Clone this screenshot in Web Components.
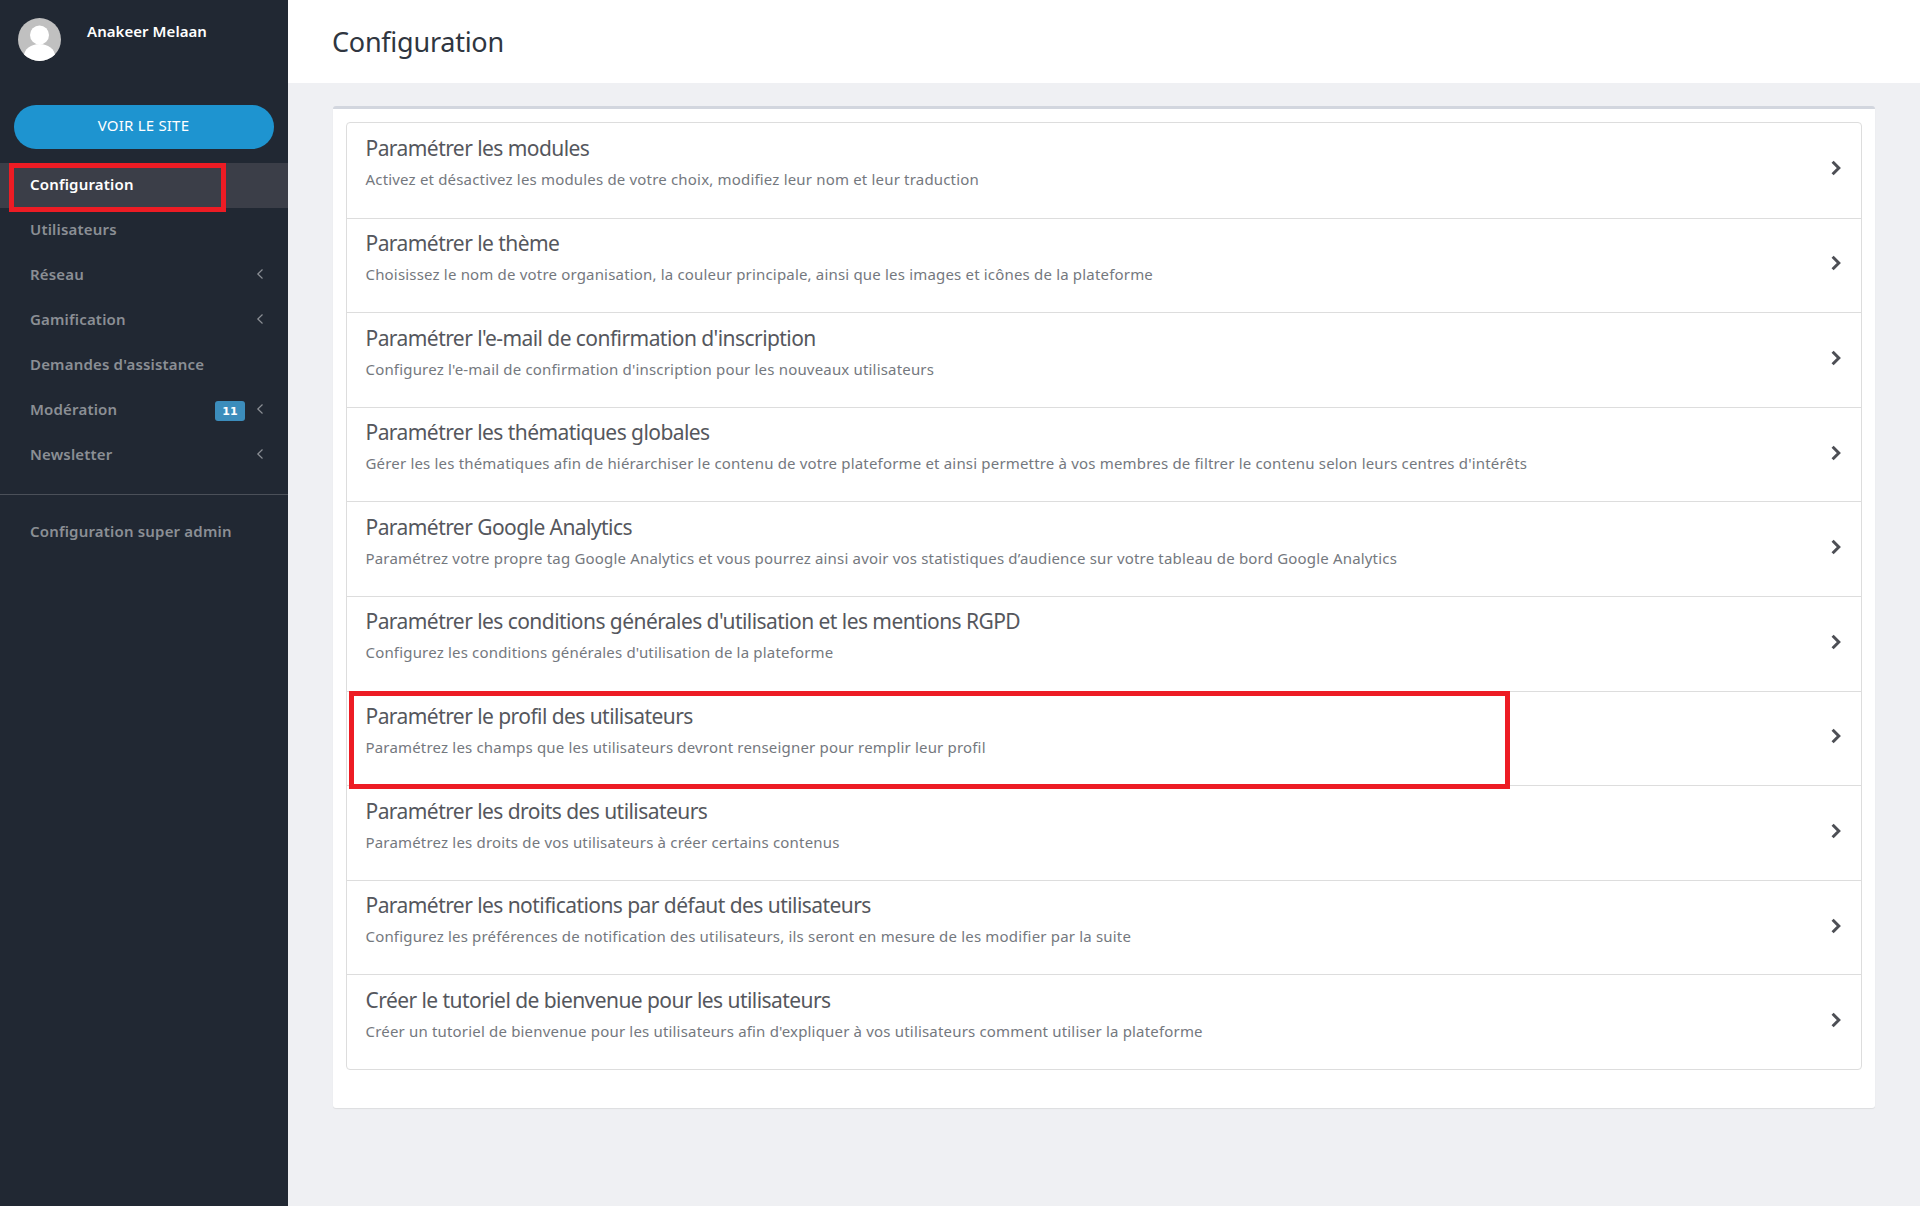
<!DOCTYPE html>
<html lang="fr">
<head>
<meta charset="utf-8">
<title>Configuration</title>
<style>
    html, body { margin: 0; height: 100%; background: #eff0f3; }
    body { font-family: "Noto Sans", sans-serif; }
    admin-shell { height: 1206px; }
</style>
</head>
<body>
<admin-shell>
    <admin-sidebar slot="side">
        <nav-item active marked>Configuration</nav-item>
        <nav-item>Utilisateurs</nav-item>
        <nav-item caret>Réseau</nav-item>
        <nav-item caret>Gamification</nav-item>
        <nav-item>Demandes d'assistance</nav-item>
        <nav-item caret badge="11">Modération</nav-item>
        <nav-item caret>Newsletter</nav-item>
        <nav-item slot="after">Configuration super admin</nav-item>
    </admin-sidebar>
    <page-header slot="head">Configuration</page-header>
    <settings-card>
        <settings-row title="Paramétrer les modules">Activez et désactivez les modules de votre choix, modifiez leur nom et leur traduction</settings-row>
        <settings-row title="Paramétrer le thème">Choisissez le nom de votre organisation, la couleur principale, ainsi que les images et icônes de la plateforme</settings-row>
        <settings-row title="Paramétrer l'e-mail de confirmation d'inscription">Configurez l'e-mail de confirmation d'inscription pour les nouveaux utilisateurs</settings-row>
        <settings-row title="Paramétrer les thématiques globales">Gérer les les thématiques afin de hiérarchiser le contenu de votre plateforme et ainsi permettre à vos membres de filtrer le contenu selon leurs centres d'intérêts</settings-row>
        <settings-row title="Paramétrer Google Analytics">Paramétrez votre propre tag Google Analytics et vous pourrez ainsi avoir vos statistiques d’audience sur votre tableau de bord Google Analytics</settings-row>
        <settings-row title="Paramétrer les conditions générales d'utilisation et les mentions RGPD">Configurez les conditions générales d'utilisation de la plateforme</settings-row>
        <settings-row marked title="Paramétrer le profil des utilisateurs">Paramétrez les champs que les utilisateurs devront renseigner pour remplir leur profil</settings-row>
        <settings-row title="Paramétrer les droits des utilisateurs">Paramétrez les droits de vos utilisateurs à créer certains contenus</settings-row>
        <settings-row title="Paramétrer les notifications par défaut des utilisateurs">Configurez les préférences de notification des utilisateurs, ils seront en mesure de les modifier par la suite</settings-row>
        <settings-row title="Créer le tutoriel de bienvenue pour les utilisateurs">Créer un tutoriel de bienvenue pour les utilisateurs afin d'expliquer à vos utilisateurs comment utiliser la plateforme</settings-row>
    </settings-card>
</admin-shell>

<script>
class AdminShell extends HTMLElement {
    constructor() {
        super();
        this.attachShadow({ mode: 'open' });
        this.shadowRoot.innerHTML = `
            <style>
                :host { display: grid; grid-template-columns: 288px 1fr; background: #eff0f3; }
                .main { display: flex; flex-direction: column; min-width: 0; }
                .content { padding: 23px 45px 0 44.5px; }
            </style>
            <slot name="side"></slot>
            <div class="main">
                <slot name="head"></slot>
                <div class="content"><slot></slot></div>
            </div>
        `;
    }
}

class AdminSidebar extends HTMLElement {
    constructor() {
        super();
        this.attachShadow({ mode: 'open' });
        this.shadowRoot.innerHTML = `
            <style>
                :host { display: block; background: #212833; color: #8b8f95; font-family: "Noto Sans", sans-serif; }
                .user { display: flex; height: 43px; padding: 18px 0 0 18px; gap: 26px; }
                .avatar { width: 43px; height: 43px; flex: none; }
                .name { color: #fff; font-size: 15px; font-weight: 600; letter-spacing: 0.05px; line-height: 27px; }
                .cta {
                    display: block; margin: 44px 14px 14px; height: 44px; border-radius: 22px;
                    background: #1e94d0; color: #fff; font-size: 15px; letter-spacing: 0.2px;
                    line-height: 41px; text-align: center; padding-right: 1px;
                }
                .after { display: block; margin-top: 16px; padding-top: 15px; border-top: 1px solid #4b5059; }
            </style>
            <div class="user">
                <svg class="avatar" viewBox="0 0 43 43">
                    <circle cx="21.5" cy="21.5" r="21.5" fill="#c0c0c0"/>
                    <clipPath id="av"><circle cx="21.5" cy="21.5" r="21.5"/></clipPath>
                    <g clip-path="url(#av)" fill="#fff">
                        <circle cx="21.5" cy="17" r="9.5"/>
                        <ellipse cx="21.5" cy="38" rx="15.5" ry="12"/>
                    </g>
                </svg>
                <div class="name">Anakeer Melaan</div>
            </div>
            <a class="cta">VOIR LE SITE</a>
            <slot></slot>
            <div class="after"><slot name="after"></slot></div>
        `;
    }
}

class NavItem extends HTMLElement {
    constructor() {
        super();
        this.attachShadow({ mode: 'open' });
    }

    connectedCallback() {
        const badge = this.getAttribute('badge');
        const caret = this.hasAttribute('caret');
        this.shadowRoot.innerHTML = `
            <style>
                :host {
                    display: flex; align-items: center; position: relative; height: 45px; box-sizing: border-box;
                    padding: 0 24px 4px 30px; font-size: 15px; font-weight: 600; letter-spacing: 0.18px; color: #8b8f95;
                }
                :host([active]) { background: #3b3e48; color: #fff; }
                .label { flex: 1; }
                .badge {
                    width: 30px; height: 20px; border-radius: 3px; background: #3c8dbc; color: #fff; margin: 4px 11px 0 0;
                    font: bold 11px/21px "DejaVu Sans", sans-serif; letter-spacing: 0; text-align: center;
                }
                svg { width: 8px; height: 12px; display: block; }
                .mark { position: absolute; left: 9px; top: 0; width: 217px; height: 49px; box-sizing: border-box; border: 5px solid #ed1c24; }
            </style>
            <span class="label"><slot></slot></span>
            ${badge ? `<span class="badge">${badge}</span>` : ''}
            ${caret ? `<svg viewBox="0 0 8 12"><path d="M6.5 1.5 1.8 6l4.7 4.5" fill="none" stroke="#8b8f95" stroke-width="1.2"/></svg>` : ''}
            ${this.hasAttribute('marked') ? `<div class="mark"></div>` : ''}
        `;
    }
}

class PageHeader extends HTMLElement {
    constructor() {
        super();
        this.attachShadow({ mode: 'open' });
        this.shadowRoot.innerHTML = `
            <style>
                :host {
                    display: block; height: 83px; box-sizing: border-box; padding: 0 0 0 44px; background: #fff;
                    font: 400 27px/83px "Noto Sans", sans-serif; letter-spacing: -0.25px; color: #2f3640;
                }
            </style>
            <slot></slot>
        `;
    }
}

class SettingsCard extends HTMLElement {
    constructor() {
        super();
        this.attachShadow({ mode: 'open' });
        this.shadowRoot.innerHTML = `
            <style>
                :host {
                    display: block; background: #fff; border-top: 3px solid #d2d6de; border-radius: 3px;
                    padding: 13px 13px 38px; box-shadow: 0 1px 1px rgba(0,0,0,.08);
                }
                .list { border: 1px solid #dddddd; border-radius: 4px; }
            </style>
            <div class="list"><slot></slot></div>
        `;
    }
}

class SettingsRow extends HTMLElement {
    constructor() {
        super();
        this.attachShadow({ mode: 'open' });
    }

    connectedCallback() {
        this.shadowRoot.innerHTML = `
            <style>
                :host {
                    display: flex; align-items: center; position: relative; height: 94.6px; box-sizing: border-box;
                    padding: 0 19.5px 4px 19px; border-top: 1px solid #dddddd; font-family: "Noto Sans", sans-serif;
                }
                :host(:first-child) { border-top: 0; }
                :host([marked]) { z-index: 1; }
                .text { flex: 1; align-self: flex-start; padding-top: 9.5px; min-width: 0; }
                h4 { margin: 0; font-size: 21px; font-weight: 400; line-height: 30px; letter-spacing: -0.56px; color: #55575d; white-space: nowrap; }
                p { margin: 4px 0 0; font-size: 15px; line-height: 24px; letter-spacing: 0.18px; color: #74787e; white-space: nowrap; }
                svg { width: 12px; height: 16px; display: block; }
                .mark { position: absolute; left: 2px; top: -1px; width: 1161px; height: 98px; box-sizing: border-box; border: 5px solid #ed1c24; }
            </style>
            <div class="text">
                <h4>${this.getAttribute('title')}</h4>
                <p><slot></slot></p>
            </div>
            <svg viewBox="0 0 12 16"><path d="M2.6 1.8 8.8 8l-6.2 6.2" fill="none" stroke="#4d4f55" stroke-width="3"/></svg>
            ${this.hasAttribute('marked') ? `<div class="mark"></div>` : ''}
        `;
    }
}

customElements.define('admin-shell', AdminShell);
customElements.define('admin-sidebar', AdminSidebar);
customElements.define('nav-item', NavItem);
customElements.define('page-header', PageHeader);
customElements.define('settings-card', SettingsCard);
customElements.define('settings-row', SettingsRow);
</script>
</body>
</html>
